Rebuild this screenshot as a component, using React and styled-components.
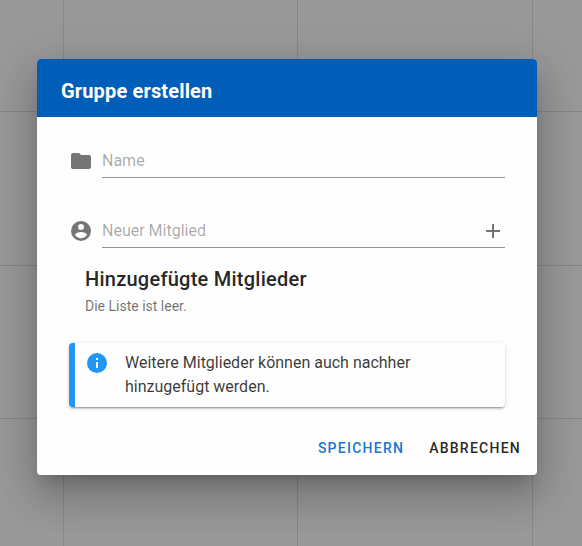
import React from "react";
import styled, { createGlobalStyle } from "styled-components";

const GlobalStyle = createGlobalStyle`
  * { box-sizing: border-box; }
  body {
    margin: 0;
    overflow: hidden;
    font-family: Roboto, "Liberation Sans", sans-serif;
    color: rgba(0, 0, 0, 0.87);
  }
`;

const Page = styled.div`
  position: relative;
  width: 582px;
  height: 546px;
  overflow: hidden;
`;

const Calendar = styled.div`
  display: grid;
  grid-template-columns: 64px 234px 235px 1fr;
  grid-template-rows: 112px 154px 153px 1fr;
  height: 100%;
  background: #999;
`;

const Day = styled.div`
  border-right: 1px solid #868686;
  border-bottom: 1px solid #868686;
  &:nth-child(4n) { border-right: 0; }
  &:nth-child(n + 13) { border-bottom: 0; }
`;

const Overlay = styled.div`
  position: absolute;
  inset: 0;
  display: flex;
  align-items: flex-start;
  padding: 59px 0 0 37px;
`;

const Dialog = styled.section`
  display: flex;
  flex-direction: column;
  width: 500px;
  height: 416px;
  overflow: hidden;
  background: #fefefe;
  border-radius: 4px;
  box-shadow: 0 11px 15px -7px rgba(0, 0, 0, 0.2), 0 24px 38px 3px rgba(0, 0, 0, 0.14),
    0 9px 46px 8px rgba(0, 0, 0, 0.12);
`;

const Header = styled.header`
  display: flex;
  align-items: center;
  flex: 0 0 58px;
  padding: 6px 24px 0;
  background: #005eb8;
`;

const Title = styled.h1`
  margin: 0;
  color: #fff;
  font-size: 20px;
  font-weight: 700;
  line-height: 32px;
  letter-spacing: 0.15px;
`;

const Content = styled.div`
  padding: 28px 32px 0;
`;

const Field = styled.label`
  display: flex;
  align-items: flex-start;
  gap: 9px;
  height: 33px;
  margin-bottom: 37px;
`;

const FieldIcon = styled.span`
  display: flex;
  padding-top: 4px;
`;

const Control = styled.span`
  display: flex;
  align-items: center;
  flex: 1;
  height: 33px;
  border-bottom: 1px solid #949494;
`;

const Input = styled.input`
  flex: 1;
  min-width: 0;
  height: 32px;
  padding: 0 0 1px;
  border: 0;
  outline: 0;
  background: none;
  font: 400 16px/20px Roboto, "Liberation Sans", sans-serif;
  &::placeholder { color: rgba(0, 0, 0, 0.34); opacity: 1; }
`;

const Icon = styled.svg`
  display: block;
  flex: none;
  width: 24px;
  height: 24px;
  fill: ${({ $color }) => $color || "#757575"};
`;

const Members = styled.div`
  margin: -22px 16px 0;
`;

const Subheading = styled.h2`
  margin: 0;
  font-size: 20px;
  font-weight: 500;
  line-height: 32px;
  letter-spacing: 0.25px;
`;

const Hint = styled.p`
  margin: 0;
  color: rgba(0, 0, 0, 0.56);
  font-size: 14px;
  line-height: 22px;
`;

const Alert = styled.div`
  display: flex;
  gap: 16px;
  height: 64px;
  margin-top: 26px;
  padding: 8px 16px 8px 10px;
  border-left: 6px solid #2196f3;
  border-radius: 4px;
  background: #fefefe;
  box-shadow: 0 3px 1px -2px rgba(0, 0, 0, 0.2), 0 2px 2px rgba(0, 0, 0, 0.14),
    0 1px 5px rgba(0, 0, 0, 0.12);
`;

const AlertText = styled.p`
  width: 310px;
  margin: 0;
  color: rgba(0, 0, 0, 0.79);
  font-size: 16px;
  line-height: 24px;
`;

const Actions = styled.footer`
  display: flex;
  justify-content: flex-end;
  gap: 9px;
  margin-top: auto;
  padding: 8px 8px 9px;
`;

const Button = styled.button`
  height: 36px;
  padding: 0 8px;
  border: 0;
  background: none;
  color: ${({ $primary }) => ($primary ? "#1976d2" : "rgba(0, 0, 0, 0.87)")};
  font: 500 14px/36px Roboto, "Liberation Sans", sans-serif;
  letter-spacing: 1.25px;
  text-transform: uppercase;
`;

const FOLDER = "M10,4H4C2.89,4 2,4.89 2,6V18A2,2 0 0,0 4,20H20A2,2 0 0,0 22,18V8C22,6.89 21.1,6 20,6H12L10,4Z";
const ACCOUNT = "M12,19.2C9.5,19.2 7.29,17.92 6,16C6.03,14 10,12.9 12,12.9C14,12.9 17.97,14 18,16C16.71,17.92 14.5,19.2 12,19.2M12,5A3,3 0 0,1 15,8A3,3 0 0,1 12,11A3,3 0 0,1 9,8A3,3 0 0,1 12,5M12,2A10,10 0 0,0 2,12A10,10 0 0,0 12,22A10,10 0 0,0 22,12C22,6.47 17.5,2 12,2Z";
const PLUS = "M19,13H13V19H11V13H5V11H11V5H13V11H19V13Z";
const INFO = "M13,9H11V7H13M13,17H11V11H13M12,2A10,10 0 0,0 2,12A10,10 0 0,0 12,22A10,10 0 0,0 22,12A10,10 0 0,0 12,2Z";

function MdiIcon({ path, color }) {
  return (
    <Icon viewBox="0 0 24 24" $color={color} aria-hidden="true">
      <path d={path} />
    </Icon>
  );
}

export default function App() {
  return (
    <Page>
      <GlobalStyle />
      <Calendar>
        {Array.from({ length: 16 }, (_, i) => <Day key={i} />)}
      </Calendar>
      <Overlay>
        <Dialog role="dialog">
          <Header><Title>Gruppe erstellen</Title></Header>
          <Content>
            <Field>
              <FieldIcon><MdiIcon path={FOLDER} /></FieldIcon>
              <Control><Input placeholder="Name" /></Control>
            </Field>
            <Field>
              <FieldIcon><MdiIcon path={ACCOUNT} /></FieldIcon>
              <Control>
                <Input placeholder="Neuer Mitglied" />
                <MdiIcon path={PLUS} />
              </Control>
            </Field>
            <Members>
              <Subheading>Hinzugefügte Mitglieder</Subheading>
              <Hint>Die Liste ist leer.</Hint>
            </Members>
            <Alert role="alert">
              <MdiIcon path={INFO} color="#2196f3" />
              <AlertText>Weitere Mitglieder können auch nachher hinzugefügt werden.</AlertText>
            </Alert>
          </Content>
          <Actions>
            <Button $primary>Speichern</Button>
            <Button>Abbrechen</Button>
          </Actions>
        </Dialog>
      </Overlay>
    </Page>
  );
}
